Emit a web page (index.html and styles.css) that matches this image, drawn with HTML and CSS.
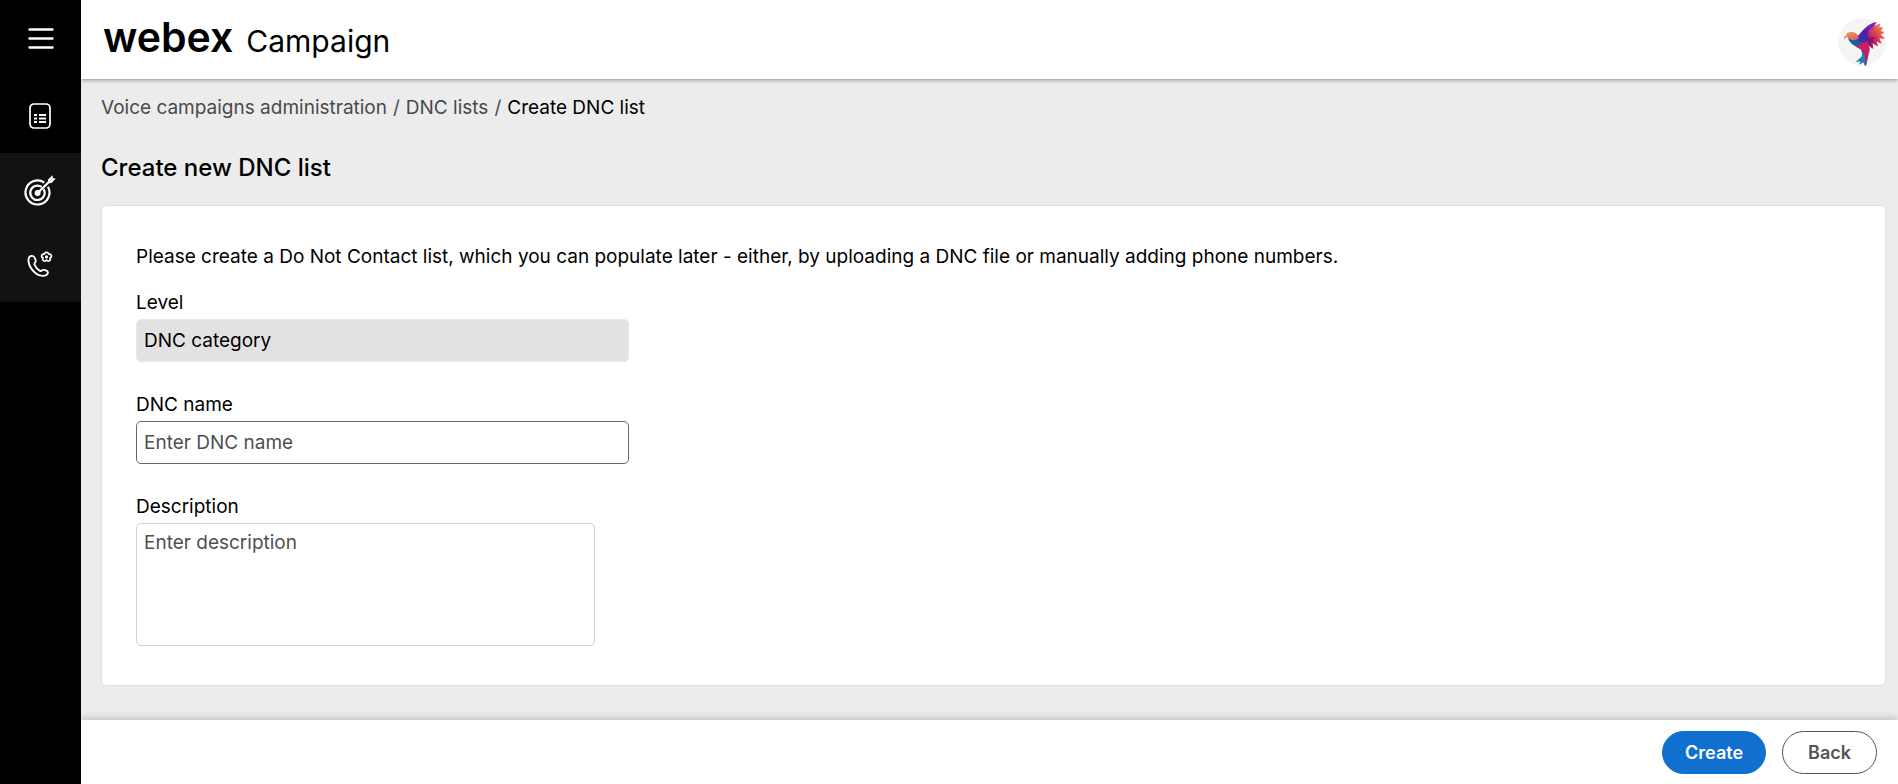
FILE: index.html
```html
<!DOCTYPE html>
<html lang="en">
<head>
<meta charset="utf-8">
<title>Create DNC list</title>
<link rel="stylesheet" href="styles.css">
</head>
<body>
<div class="app">
  <nav class="sidebar" aria-label="Main">
    <button class="menu-button" type="button" aria-label="Menu">
      <svg width="26" height="22" viewBox="0 0 26 22" fill="none" stroke="#fff" stroke-width="2.4" stroke-linecap="round"><path d="M1.500 1.500h23M1.500 10.500h23M1.500 19.500h23"/></svg>
    </button>
    <a class="nav-item" href="#" aria-label="Lists">
      <svg width="22" height="26" viewBox="0 0 22 26" fill="none" stroke="#fff"><rect x="1" y="1" width="20" height="24" rx="4" stroke-width="1.700"/><path d="M5 12h3M5 15.500h3M5 19h3M10 12h7M10 15.500h7M10 19h7" stroke-width="1.900"/></svg>
    </a>
    <div class="nav-group">
      <a class="nav-item" href="#" aria-label="Campaigns">
        <svg width="32" height="32" viewBox="0 0 32 32" fill="none" stroke="#fff"><path d="M20.300 7.600A12 12 0 1 0 24 11.700" stroke-width="2.200"/><path d="M17.600 11.900A7.200 7.200 0 1 0 19.700 14.200" stroke-width="2.200"/><circle cx="13.600" cy="18" r="3" fill="#fff" stroke="none"/><path d="M13.600 18L27 5" stroke-width="2.300"/><path d="M24 4.500L28.500.3l.5 2.700 2.700.8L27.500 8l-3.200.2z" fill="#fff" stroke="none"/></svg>
      </a>
      <a class="nav-item" href="#" aria-label="Voice campaigns">
        <svg width="26" height="28" viewBox="0 0 26 28" fill="none" stroke="#fff" stroke-width="1.900" stroke-linejoin="round"><path d="M1.500 8.500C1 15.500 8 24.500 15.500 24.900C19 25 21.300 23 20.900 21.200C20.500 19.700 17.500 18.600 16.200 18.900C14.700 19.200 14.500 20.500 13 19.800C10.500 18.500 8.300 15.700 7.400 13.400C6.900 12 9 11.600 8.700 9.800C8.400 7.600 6.800 4.900 5 4.900C3 4.900 1.700 6.500 1.500 8.500Z"/><path d="M19.500 1.300C20.900 1.300 21.600 2 21.700 3.100C23.100 2.900 24.200 3.500 24.400 4.700C24.600 5.700 23.900 6.500 23 6.800C23.700 8 23.300 9 22.500 9.600C21.500 10.300 20.300 10 19.500 9C18.700 10 17.500 10.300 16.500 9.600C15.700 9 15.300 8 16 6.800C15.100 6.500 14.400 5.700 14.600 4.700C14.800 3.500 15.900 2.900 17.300 3.100C17.400 2 18.100 1.300 19.500 1.300Z" stroke-width="1.700"/><circle cx="19.500" cy="5.900" r=".9" stroke-width="1.400"/></svg>
      </a>
    </div>
  </nav>
  <div class="page">
    <header class="topbar">
      <a class="brand" href="#"><span class="brand-name">webex</span><span class="brand-product">Campaign</span></a>
      <button class="avatar" type="button" aria-label="Account">
        <svg width="48" height="48" viewBox="11 12 144 144">
          <defs>
            <linearGradient id="wing" x1="0" y1="1" x2="1" y2="0"><stop offset="0" stop-color="#2449a8"/><stop offset=".5" stop-color="#4a20a8"/><stop offset="1" stop-color="#a61cc8"/></linearGradient>
            <linearGradient id="feather" x1="0" y1="1" x2="1" y2="0"><stop offset="0" stop-color="#8a1a70"/><stop offset=".5" stop-color="#d32c5c"/><stop offset="1" stop-color="#f8a545"/></linearGradient>
            <linearGradient id="head" x1="0" y1="0" x2="1" y2="1"><stop offset="0" stop-color="#f3a34f"/><stop offset="1" stop-color="#d9535e"/></linearGradient>
          </defs>
          <circle cx="83" cy="84" r="72" fill="#f5f5f5"/>
          <path d="M84 84C92 56 112 36 137 29Q140 34 134 40L145 39Q146 47 139 51L150 54Q147 61 139 62L152 73Q144 76 135 72L142 89Q134 88 127 81L131 97Q121 94 115 86L117 105Q107 99 102 91Z" fill="url(#feather)"/>
          <path d="M100 74Q114 65 127 72L114 76L122 90Q114 89 109 82L113 103Q104 95 98 88Z" fill="#7d176e"/>
          <path d="M66 70C82 58 92 30 127 24C120 38 110 46 107 56C103 74 98 87 90 93Q72 94 56 85Q62 75 66 70Z" fill="url(#wing)"/>
          <path d="M104 49Q112 41 122 34Q114 54 98 68Z" fill="#d4316c"/>
          <path d="M29 77Q28 66 36 64Q36 54 50 54Q66 55 70 64L74 72Q67 80 57 81Q46 79 40 69Q33 70 29 77Z" fill="url(#head)"/>
          <path d="M40 69Q49 82 68 77Q79 90 92 86L99 94L100 132L95 158L88 144L76 151L81 141L65 144L84 126Q84 108 75 102Q46 92 40 69Z" fill="#15609f"/>
          <path d="M76 87Q90 88 97 80Q111 101 103 121L95 153Q91 130 85 110Q77 104 64 98Q76 97 76 87Z" fill="#c82061"/>
          <path d="M87 113L92 130L91 157L86 140L74 153L79 139L65 145L82 129Z" fill="#1685b6"/>
        </svg>
      </button>
    </header>
    <main class="content">
      <nav class="breadcrumb" aria-label="Breadcrumb"><a href="#">Voice campaigns administration</a><span>/</span><a href="#">DNC lists</a><span>/</span><span class="current">Create DNC list</span></nav>
      <h1 class="title">Create new DNC list</h1>
      <form class="card" id="dnc-form">
        <p class="intro">Please create a Do Not Contact list, which you can populate later - either, by uploading a DNC file or manually adding phone numbers.</p>
        <div class="field"><label for="level">Level</label><input id="level" class="control readonly" value="DNC category" readonly></div>
        <div class="field"><label for="name">DNC name</label><input id="name" class="control" placeholder="Enter DNC name"></div>
        <div class="field"><label for="description">Description</label><textarea id="description" class="control area" placeholder="Enter description"></textarea></div>
      </form>
    </main>
    <footer class="actions"><button class="button primary" form="dnc-form">Create</button><button class="button" type="button">Back</button></footer>
  </div>
</div>
</body>
</html>
```
FILE: styles.css
```css
* { box-sizing: border-box; }
body { margin: 0; font: 19px/24px Inter, "Liberation Sans", sans-serif; color: #000; }
.app { display: flex; min-height: 100vh; }
.sidebar { width: 81px; background: #000; flex: none; }
.menu-button { display: flex; align-items: center; justify-content: center; width: 100%; height: 78px; padding: 0; border: 0; background: none; }
.nav-item { display: flex; align-items: center; justify-content: center; height: 75px; padding-right: 1px; }
.nav-group { background: #121212; }
.nav-group .nav-item:last-child { height: 74px; }
.page { flex: 1; display: flex; flex-direction: column; min-width: 0; background: #ececec; }
.topbar { height: 79px; padding: 18px 12px 0 22px; background: #fff; display: flex; align-items: flex-start; justify-content: space-between; box-shadow: 0 1px 4px rgba(0,0,0,.4); }
.brand { display: flex; align-items: baseline; gap: 13px; color: #000; text-decoration: none; line-height: 38px; }
.brand-name { font-size: 41px; font-weight: 600; }
.brand-product { font-size: 30px; }
.avatar { display: flex; padding: 0; border: 0; background: none; }
.content { flex: 1; padding: 17px 12px 34px 20px; }
.breadcrumb { display: flex; gap: 6px; color: #4a4a4a; }
.breadcrumb a { color: inherit; text-decoration: none; }
.breadcrumb .current { color: #000; }
.title { margin: 32px 0 21px; font-size: 24px; line-height: 32px; font-weight: 500; }
.card { padding: 39px 34px; background: #fff; border: 1px solid #e2e2e2; border-radius: 5px; }
.intro { margin: 0 0 22px; }
.field { display: flex; flex-direction: column; gap: 4px; margin-bottom: 31px; }
.field:last-child { margin-bottom: 0; }
.control { width: 493px; max-width: 100%; height: 43px; padding: 0 7px; border: 1px solid #666; border-radius: 5px; font: inherit; }
.readonly { background: #e2e2e2; border-color: #e8e8e8; }
.area { width: 459px; height: 123px; padding: 7px; border-color: #d0d0d0; resize: none; }
.control::placeholder { color: #4f4f4f; }
.actions { display: flex; justify-content: flex-end; gap: 16px; padding: 11px 21px 10px; background: #fff; box-shadow: 0 -1px 8px rgba(20,20,50,.25); }
.button { height: 43px; padding: 0 25px; border: 1px solid #555; border-radius: 22px; background: #fff; font: 600 18px Inter, "Liberation Sans", sans-serif; color: #555; }
.primary { padding: 0 22px; background: #1170cf; border-color: #1170cf; color: #fff; }
```
